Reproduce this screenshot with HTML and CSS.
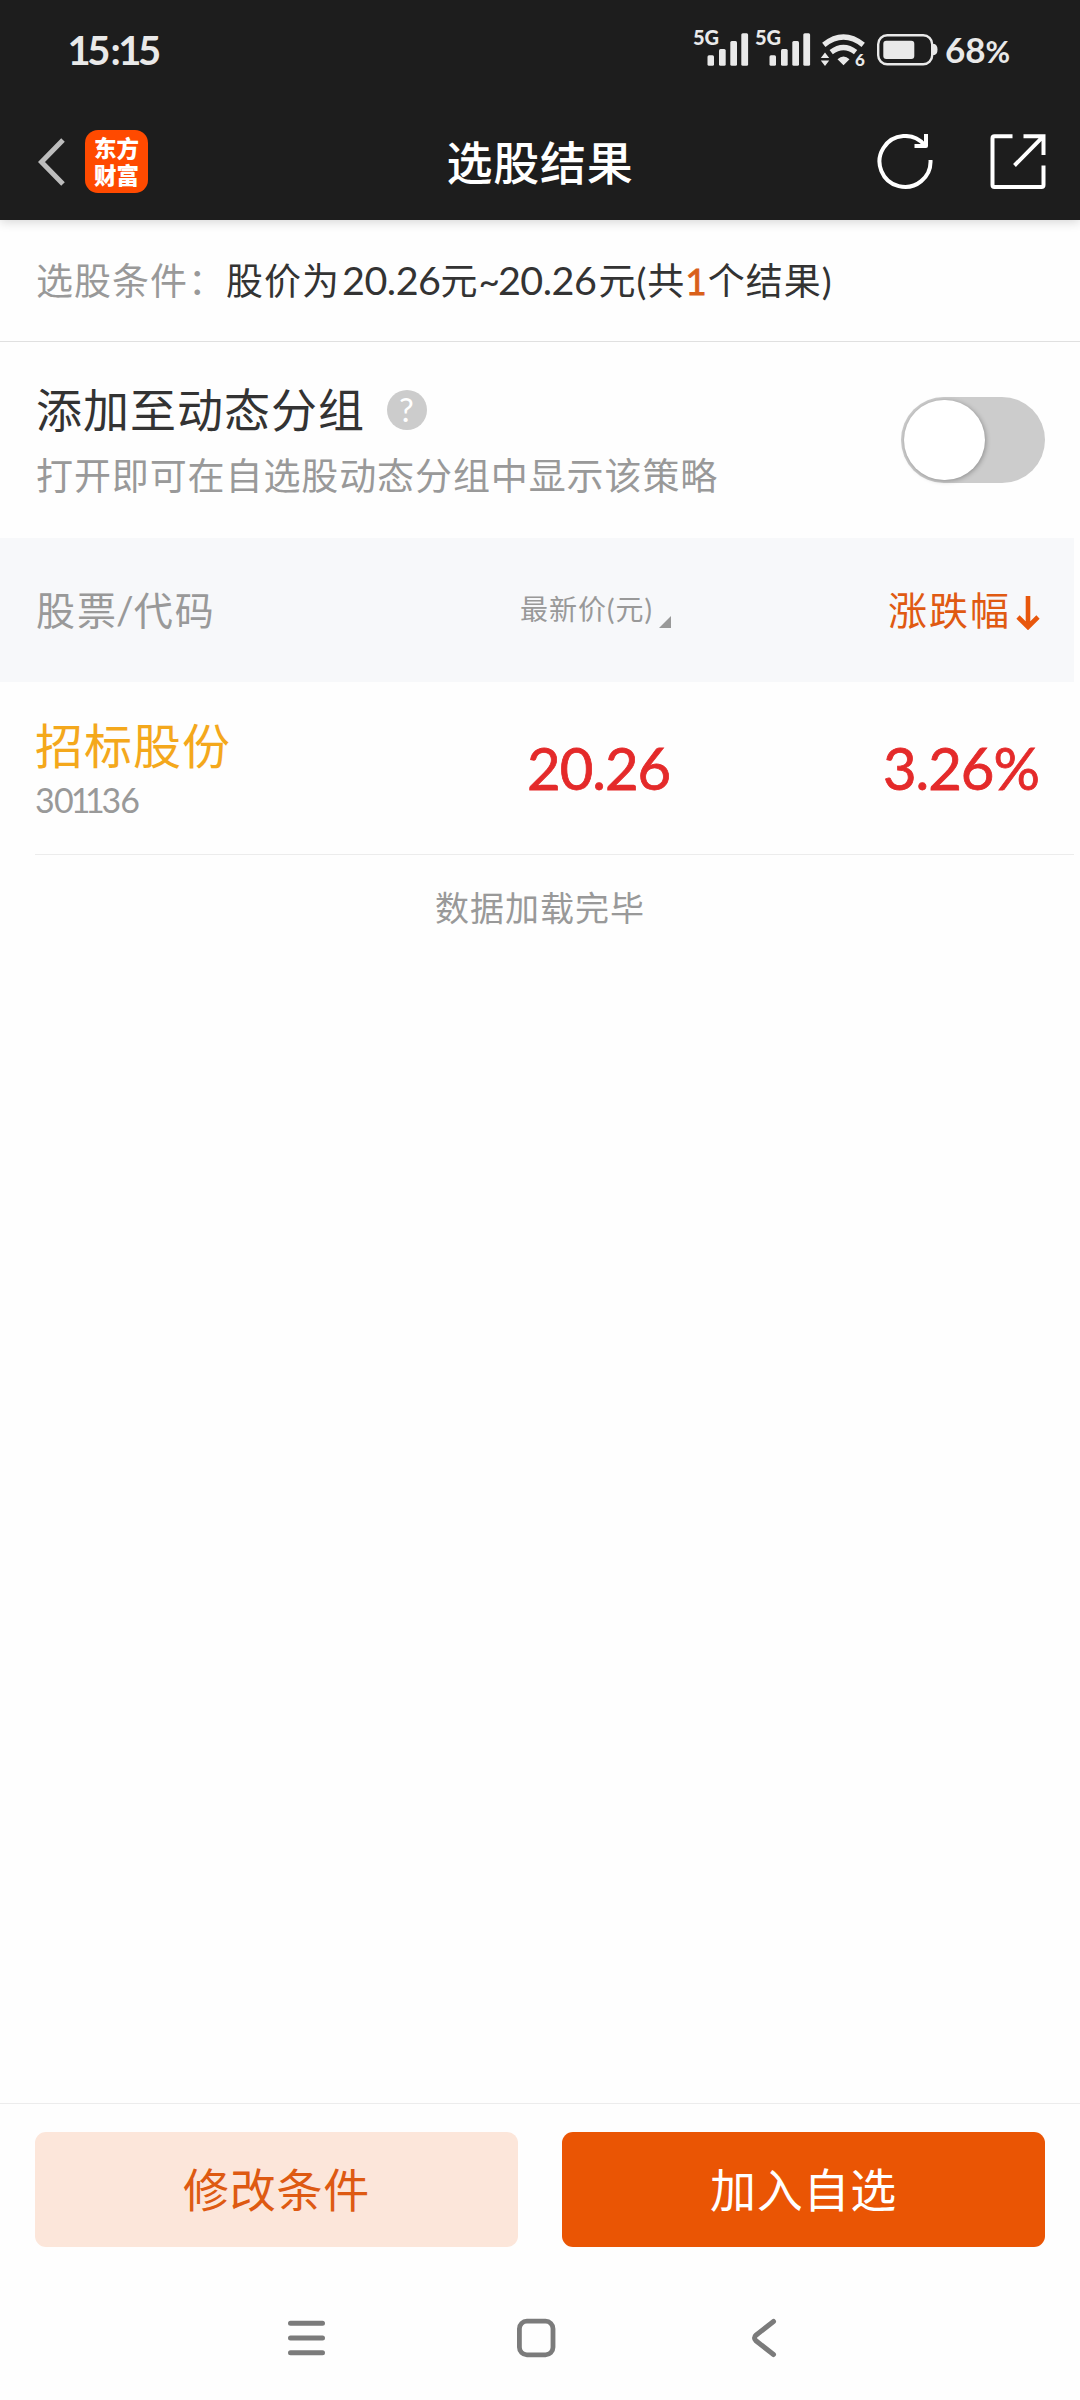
FILE: index.html
```html
<!DOCTYPE html>
<html lang="zh-CN">
<head>
<meta charset="utf-8">
<title>选股结果</title>
<link rel="stylesheet" href="styles.css">
</head>
<body>
<div class="screen">
  <header class="top">
    <div class="status">
      <span class="clock"><span class="one">1</span>5:<span class="one">1</span>5</span>
      <div class="status-right">
        <svg class="radio" width="181" height="50" viewBox="687 20 181 50" fill="#e9e9e9">
          <text class="net" x="693" y="45" textLength="26">5G</text>
          <rect x="707.5" y="55.3" width="6.5" height="10.5" rx="1.5"/><rect x="719" y="49" width="6.7" height="16.8" rx="1.5"/><rect x="730.3" y="41" width="6.7" height="24.8" rx="1.5"/><rect x="741.3" y="33.3" width="6.8" height="32.5" rx="1.5"/>
          <text class="net" x="755" y="45" textLength="26">5G</text>
          <rect x="769.5" y="55.3" width="6.5" height="10.5" rx="1.5"/><rect x="781" y="49" width="6.7" height="16.8" rx="1.5"/><rect x="792.3" y="41" width="6.7" height="24.8" rx="1.5"/><rect x="803.3" y="33.3" width="6.8" height="32.5" rx="1.5"/>
          <g fill="none" stroke="#e9e9e9" stroke-width="5.4"><path d="M823.8 44.8Q843.5 29.2 863.2 44.8"/><path d="M831.2 52.2Q843.5 43 855.6 52.2"/></g>
          <path d="M837.5 59.3q6-5.6 12 0l-6 5.900zM820.800 58l4.200-5.400 4.200 5.400zM820.800 60.500h8.400l-4.200 5.600z"/>
          <text class="gen" x="855" y="66.3">6</text>
        </svg>
        <svg class="battery" width="61" height="32" viewBox="0 0 61 32"><rect x="1.2" y="1.2" width="54" height="29" rx="9" fill="none" stroke="#e9e9e9" stroke-width="2.4"/><rect x="6.3" y="6.8" width="31" height="18.2" rx="3" fill="#e9e9e9"/><path d="M56 10h1.500q3 1 3 5.500t-3 5.500h-1.500z" fill="#e9e9e9"/></svg>
        <span class="level">68<small>%</small></span>
      </div>
    </div>
    <nav class="titlebar">
      <div class="side">
        <svg width="28" height="48" viewBox="0 0 28 48"><path d="M25 2 3.500 24 25 46" fill="none" stroke="#bdbdbd" stroke-width="5"/></svg>
        <div class="logo"><span>东方</span><span>财富</span></div>
      </div>
      <h1>选股结果</h1>
      <div class="side end">
        <svg width="56" height="56" viewBox="0 0 56 56" fill="none" stroke="#fff" stroke-width="4"><path d="M53.500 26A25.500 25.500 0 1 1 47.500 11"/><path d="M37.500 12H49V0" stroke-linejoin="round"/></svg>
        <svg width="56" height="56" viewBox="0 0 56 56" fill="none" stroke="#fff" stroke-width="4"><path d="M22.500 2.200H4.500Q2.500 2.200 2.500 4.200V51Q2.500 53 4.500 53H51.500Q53.500 53 53.500 51V31.500M33.500 2.200H53.500V21M52.500 3.200 24.500 31.500"/></svg>
      </div>
    </nav>
  </header>

  <section class="condition"><span class="label">选股条件：</span><span class="value">股价为<span class="num">20.26</span>元<span class="tilde">~</span><span class="num second">20.26</span>元(共<b>1</b>个结果)</span></section>

  <section class="group">
    <div class="group-text">
      <div class="group-title">添加至动态分组<span class="help">?</span></div>
      <div class="group-sub">打开即可在自选股动态分组中显示该策略</div>
    </div>
    <div class="switch"><i></i></div>
  </section>

  <section class="table">
    <div class="thead">
      <span class="name">股票<span class="slash">/</span>代码</span>
      <span class="price">最新价(元)<svg width="12" height="12" viewBox="0 0 12 12"><path d="M12 0V12H0z" fill="#999"/></svg></span>
      <span class="change">涨跌幅<svg width="24" height="34" viewBox="0 0 24 34" fill="none" stroke="#e8570c" stroke-width="4.600"><path d="M12 0V31M2 21 12 31 22 21"/></svg></span>
    </div>
    <div class="row">
      <div class="name"><div class="stock">招标股份</div><div class="code">30<span class="one">1</span><span class="one">1</span>36</div></div>
      <div class="price">20.26</div>
      <div class="change">3.26%</div>
    </div>
  </section>
  <div class="loaded">数据加载完毕</div>

  <footer class="actions">
    <button class="edit">修改条件</button>
    <button class="add">加入自选</button>
  </footer>
  <div class="sysnav">
    <svg width="38" height="40" viewBox="0 0 38 40" stroke="#7b7b7b" stroke-width="5" stroke-linecap="round"><path d="M3.500 5.300H35.500M3.500 20H35.500M3.500 34.700H35.500"/></svg>
    <svg width="40" height="40" viewBox="0 0 40 40" fill="none" stroke="#7b7b7b" stroke-width="4.800"><rect x="3.400" y="3.200" width="33.600" height="33.600" rx="7.500"/></svg>
    <svg width="26" height="40" viewBox="0 0 26 40" fill="none" stroke="#7b7b7b" stroke-width="5" stroke-linecap="round"><path d="M22.500 3.500 5 17.200Q2 20 5 22.800L22.500 36.500"/></svg>
  </div>
</div>
</body>
</html>
```
FILE: styles.css
```css
* { box-sizing: border-box; }
body { margin: 0; background: #fefefe; color: #333; font-family: Lato, "Noto Sans CJK SC", sans-serif; }
svg { display: block; flex: none; }
.screen { width: 1080px; height: 2400px; display: flex; flex-direction: column; background: #fefefe; }

.top { height: 220px; background: #1d1d1d; color: #fff; box-shadow: 0 2px 10px rgba(0, 0, 0, .16); }
.status { height: 104px; padding: 0 70px 0 70px; display: flex; justify-content: space-between; color: #e9e9e9; }
.clock { font-size: 40px; font-weight: 700; line-height: 101px; }
.one { letter-spacing: -.08em; margin-left: -.06em; }
.clock .one { letter-spacing: -.09em; }
.status-right { display: flex; }
.radio { margin-top: 20px; overflow: visible; }
.battery { margin: 34px 7px 0 9px; }
.net { font-size: 20px; font-weight: 900; }
.gen { font-size: 17px; font-weight: 900; }
.level { width: 65px; font-size: 35px; font-weight: 700; line-height: 99px; white-space: nowrap; }
.level small { font-size: 30px; }
.titlebar { height: 116px; padding: 0 34px 0 38px; display: flex; align-items: center; justify-content: space-between; }
.side { width: 200px; display: flex; align-items: center; gap: 19px; }
.side.end { justify-content: flex-end; gap: 57px; }
.logo { width: 63px; height: 63px; margin-bottom: 2px; border-radius: 13px; background: #ff4a00; font: 900 22.500px/27px "Noto Sans CJK SC", sans-serif; display: flex; flex-direction: column; align-items: center; justify-content: center; }
h1 { margin: 2px 4px 0 0; font-size: 46px; font-weight: 500; letter-spacing: .8px; line-height: 60px; }

.condition { height: 122px; border-bottom: 1px solid #e0e0e0; padding: 0 0 4px 36px; display: flex; align-items: center; font-size: 37px; letter-spacing: 1px; white-space: nowrap; }
.label { color: #999; width: 190px; }
.condition b { font-weight: 400; color: #d9601a; -webkit-text-stroke: .8px #d9601a; }
.num { margin-left: 2px; font-size: 39.500px; letter-spacing: -.5px; }
.num.second { margin-left: -1px; margin-right: 2px; }
.tilde { letter-spacing: -1px; }

.group { height: 196px; padding: 0 35px 0 36px; display: flex; justify-content: space-between; }
.group-text { padding-top: 38px; }
.group-title { font-size: 46px; letter-spacing: 1px; line-height: 60px; display: flex; align-items: center; }
.help { width: 40px; height: 40px; margin-left: 22px; border-radius: 50%; background: #ccc; color: #fff; font-size: 33px; line-height: 39px; text-align: center; }
.group-sub { margin-top: 10px; font-size: 37px; letter-spacing: .9px; line-height: 52px; color: #999; }
.switch { width: 144px; height: 86px; margin-top: 55px; padding: 3px; border-radius: 43px; background: #ccc; }
.switch i { display: block; width: 81px; height: 80px; border-radius: 40px; background: #fff; box-shadow: 1px 1px 5px rgba(0, 0, 0, .3); }

.table { width: 1074px; }
.thead { height: 144px; background: #f7f8fa; display: flex; align-items: center; padding: 0 34px 4px 36px; color: #999; }
.thead .name { width: 484px; font-size: 39px; letter-spacing: 2px; }
.slash { margin-left: -2px; letter-spacing: 0; }
.thead .price { flex: 1; font-size: 28px; letter-spacing: 1px; display: flex; align-items: center; }
.thead .price svg { margin: 27px 0 0 6px; }
.thead .change { font-size: 39px; letter-spacing: 2px; color: #e05a12; display: flex; align-items: center; gap: 5px; }
.change svg { margin-top: 9px; }
.row { height: 173px; margin-left: 35px; border-bottom: 1px solid #ececec; display: flex; align-items: center; padding-right: 35px; }
.row .name { width: 492px; padding-top: 2px; }
.stock { font-size: 48px; letter-spacing: 1px; line-height: 62px; color: #f4a81c; }
.code { font-size: 34px; line-height: 46px; letter-spacing: -.8px; color: #999; }
.code .one { letter-spacing: -.1em; }
.row .price, .row .change { padding-bottom: 1px; font-size: 58px; letter-spacing: -1px; color: #e42a2a; -webkit-text-stroke: .8px #e42a2a; }
.row .price { flex: 1; }
.loaded { margin-top: 27px; text-align: center; font-size: 34px; letter-spacing: 1px; line-height: 52px; color: #999; }

.actions { margin-top: auto; height: 145px; border-top: 1px solid #ececec; padding: 28px 35px 0; display: flex; gap: 44px; }
.actions button { flex: 1; height: 115px; padding: 0 0 5px; border: 0; border-radius: 11px; font: 400 46px/110px "Noto Sans CJK SC", sans-serif; letter-spacing: .7px; }
.edit { background: #fce6da; color: #de5a12; }
.add { background: #ea5504; color: #fff; }
.sysnav { height: 152px; padding: 70px 303px 0 287px; display: flex; justify-content: space-between; }
.sysnav svg:nth-child(2) { margin: 0 4px 0 0; }
```
